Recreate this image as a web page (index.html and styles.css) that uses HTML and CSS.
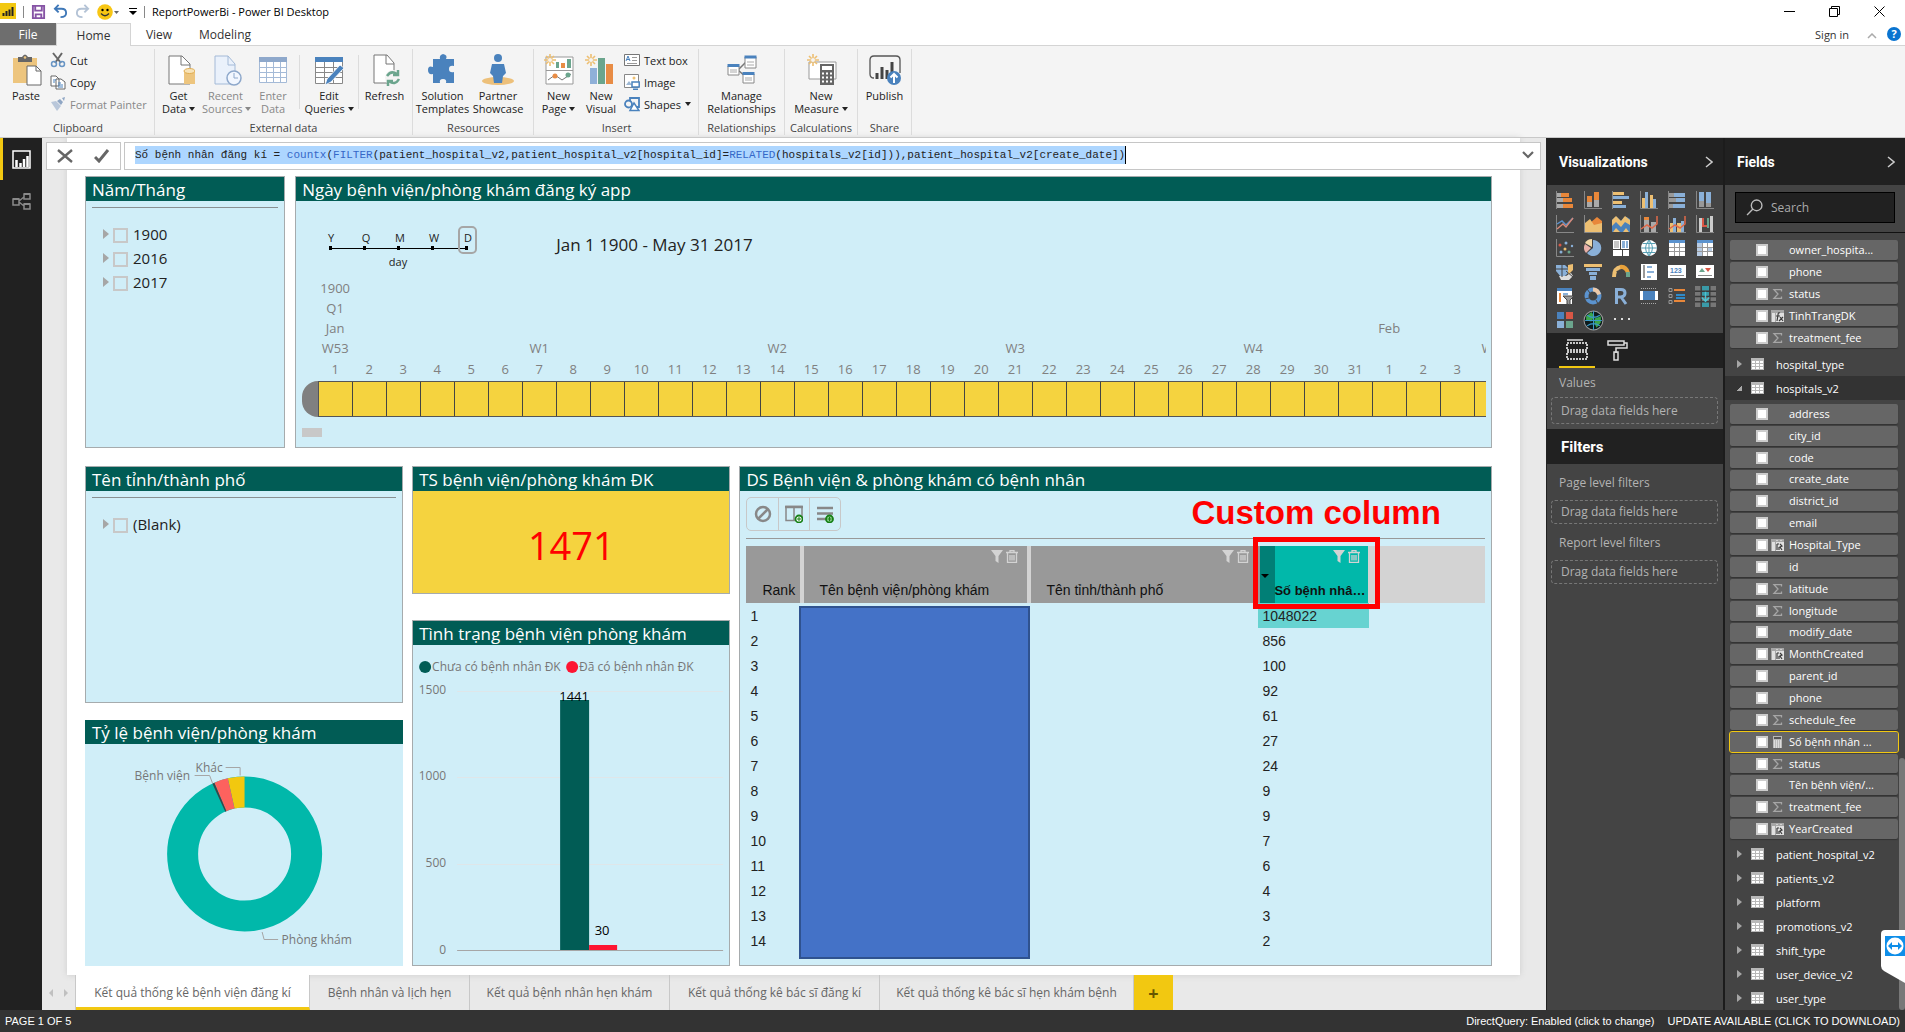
FILE: index.html
```html
<!DOCTYPE html>
<html lang="vi">
<head>
<meta charset="utf-8">
<meta name="viewport" content="width=device-width, initial-scale=1">
<title>ReportPowerBi - Power BI Desktop</title>
<link rel="stylesheet" href="styles.css">
</head>
<body>
<svg class="defs" aria-hidden="true">
  <symbol id="table" viewBox="0 0 13 12"><path fill="#b8b8b8" d="M0 0h13v12H0z"/><path fill="#fff" d="M1 3h3v2H1zM5 3h3v2H5zM9 3h3v2H9zM1 6h3v2H1zM5 6h3v2H5zM9 6h3v2H9zM1 9h3v2H1zM5 9h3v2H5zM9 9h3v2H9z"/></symbol>
  <symbol id="sigma" viewBox="0 0 13 12"><path fill="none" stroke="#a6a6a6" stroke-width="1.3" d="M10.500 3.500V1.700H3l4 4.300-4 4.300h7.500V8.500"/></symbol>
  <symbol id="calccol" viewBox="0 0 13 12"><path fill="#a6a6a6" d="M0 0h13v12H0z"/><path fill="#e0e0e0" d="M1 3h3v9H1zM5 3h8v9H5z"/><path fill="#d0d0d0" d="M5 1h2v1H5zM9 1h2v1H9z"/><path fill="none" stroke="#3a3a3a" stroke-width="1.200" d="M6 11V5M6 5h2M9 5l2 2-2 1 2 3M8 8v3"/></symbol>
  <symbol id="fx" viewBox="0 0 13 12"><path fill="#a6a6a6" d="M0 0h13v12H0z"/><path fill="#e0e0e0" d="M1 3h3v9H1zM5 3h8v9H5z"/><path fill="none" stroke="#3a3a3a" stroke-width="1.200" d="M9 3q-2-1-2 2l-1 6M5 6h4M8 11l4-4M9 7l3 4"/></symbol>
  <symbol id="calc" viewBox="0 0 13 12"><path fill="#b8b8b8" d="M2 0h9v12H2z"/><path fill="#555" d="M3 1h7v2H3z"/><path stroke="#fff" stroke-dasharray="1 1" d="M3 5h7M3 7h7M3 9h7M3 11h7"/></symbol>
  <symbol id="filter" viewBox="0 0 12 13"><path fill="#d3d3d3" d="M0 0h12L7.500 6v7L4.500 11V6z"/></symbol>
  <symbol id="trash" viewBox="0 0 12 13"><path fill="none" stroke="#d3d3d3" stroke-width="1.300" d="M0 2.500h12M4 2V.7h4V2M1.500 3v9.300h9V3M4 5v5.500M6 5v5.500M8 5v5.500"/></symbol>
  <symbol id="spark" viewBox="0 0 12 12"><path stroke="#edbf72" stroke-width="1.600" d="M6 0v12M0 6h12M2 2l8 8M10 2l-8 8"/><circle cx="6" cy="6" r="2" fill="#f4f4f4"/></symbol>
</svg>

<header class="titlebar">
  <svg class="logo" viewBox="0 0 16 16"><path fill="#f2c811" d="M0 0h16v16H0z"/><path stroke="#222" stroke-width="2" d="M3.500 13v-3M6.500 13V8M9.500 13V6.500M12.500 13V4"/></svg>
  <span class="vbar"></span>
  <button class="quick" aria-label="Save"><svg viewBox="0 0 16 16"><path fill="none" stroke="#8653a5" stroke-width="2" d="M2 2h12v13H2zM4.500 2v5h7V2M5 15v-4h6v4"/></svg></button>
  <button class="quick" aria-label="Undo"><svg viewBox="0 0 16 16"><path fill="none" stroke="#3f78b8" stroke-width="2" d="M6 1L2 5l4 4M2 5h7q5 0 5 4.500T8 14"/></svg></button>
  <button class="quick" aria-label="Redo"><svg viewBox="0 0 16 16"><path fill="none" stroke="#b4c3d6" stroke-width="2" d="M10 1l4 4-4 4M14 5H7Q2 5 2 9.500T8 14"/></svg></button>
  <button class="quick smile" aria-label="Feedback"><svg viewBox="0 0 22 16"><circle cx="8" cy="8" r="7.800" fill="#f8c614"/><circle cx="5.500" cy="6" r="1.200"/><circle cx="10.500" cy="6" r="1.200"/><path fill="none" stroke="#333" stroke-width="1.300" d="M4 9.500q4 4.500 8 0"/><path fill="#666" d="M17 7h5l-2.500 3z"/></svg></button>
  <button class="quick narrow" aria-label="Customize toolbar"><svg viewBox="0 0 8 8"><path d="M0 0h8v1H0zM0 3h8L4 7z"/></svg></button>
  <span class="vbar"></span>
  <span class="app-title">ReportPowerBi - Power BI Desktop</span>
  <span class="window-buttons">
    <button aria-label="Minimize"><svg viewBox="0 0 11 11"><path stroke="#000" d="M0 5.500h11"/></svg></button>
    <button aria-label="Restore"><svg viewBox="0 0 11 11"><path fill="none" stroke="#000" d="M.5 2.500h8v8h-8zM2.500 2V.5h8v8H9"/></svg></button>
    <button aria-label="Close"><svg viewBox="0 0 11 11"><path stroke="#000" d="M.5.5l10 10M10.500.5l-10 10"/></svg></button>
  </span>
</header>

<nav class="ribbon-tabs">
  <button class="file">File</button>
  <button class="home">Home</button>
  <button class="view">View</button>
  <button class="modeling">Modeling</button>
  <span class="account">
    <button>Sign in</button>
    <button aria-label="Collapse ribbon"><svg width="10" height="6" viewBox="0 0 10 6"><path fill="none" stroke="#aaa" stroke-width="1.500" d="M1 5l4-4 4 4"/></svg></button>
    <button class="help" aria-label="Help">?</button>
  </span>
</nav>

<section class="ribbon">
  <div class="group clipboard">
    <div class="tools">
      <button class="big w50"><svg viewBox="0 0 32 32"><path fill="#edc57e" d="M3 4h24v25H3z"/><path fill="#666" d="M8 3h4q3-5 6 0h4v5H8z"/><circle cx="15" cy="3.500" r="1.300" fill="#edc57e"/><path fill="#fff" stroke="#666" d="M17 12h9l5 5v14H17z"/><path fill="none" stroke="#666" d="M26 12v5h5"/></svg>Paste</button>
      <div class="stack">
        <button class="small"><svg viewBox="0 0 16 16"><path stroke="#666" stroke-width="2" d="M3 1l8 10M12 1L5 11"/><circle cx="4" cy="12" r="2.500" fill="none" stroke="#6895c5" stroke-width="1.500"/><circle cx="12" cy="12" r="2.500" fill="none" stroke="#6895c5" stroke-width="1.500"/></svg>Cut</button>
        <button class="small"><svg viewBox="0 0 16 16"><path fill="#fff" stroke="#666" d="M1 2h5l3 3v7H1zM6 5h5l4 3v7H6z"/><path stroke="#4a82bd" d="M3 6h3M3 8h2M8 9h3M8 11h5M8 13h5"/></svg>Copy</button>
        <button class="small off"><svg viewBox="0 0 16 16"><path fill="#b9c7da" d="M1 6l5-1 5 5-4 5z"/><path fill="#8fa6c4" d="M7 5l3-2 3 3-2 3zM12 2l3-1-1 4z"/></svg>Format Painter</button>
      </div>
    </div>
    <span class="caption">Clipboard</span>
  </div>
  <div class="group external">
    <div class="tools">
      <button class="big w47"><svg viewBox="0 0 32 32"><path fill="#fff" stroke="#777" d="M6 2h13l8 8v20H6z"/><path fill="none" stroke="#777" d="M18 2v9h9"/><path fill="#edc57e" d="M21 17h11v13H21z"/><ellipse cx="26.500" cy="17" rx="5.500" ry="2.500" fill="#f7e3b8" stroke="#e0ac50"/></svg>Get<br>Data <i class="arrow"></i></button>
      <button class="big off w47"><svg viewBox="0 0 32 32"><path fill="#eaf1fb" stroke="#a4bad7" d="M5 2h13l7 8v20H5z"/><path fill="none" stroke="#a4bad7" d="M18 2v9h7"/><circle cx="24" cy="24" r="7" fill="#f2f7ff" stroke="#8ea8cb" stroke-width="1.500"/><path fill="none" stroke="#8ea8cb" d="M24 19v5h4"/></svg>Recent<br>Sources <i class="arrow"></i></button>
      <button class="big off w48"><svg viewBox="0 0 32 32"><path fill="#fff" stroke="#a4bad7" d="M2.500 3.500h27v25h-27z"/><path fill="#8ea8cb" d="M2 3h28v5H2z"/><path fill="none" stroke="#a4bad7" d="M2 13.500h28M2 18.500h28M2 23.500h28M9.500 8v20M16.500 8v20M23.500 8v20"/></svg>Enter<br>Data</button>
      <span class="split"></span>
      <button class="big w54"><svg viewBox="0 0 32 32"><path fill="#fff" stroke="#888" d="M2.500 3.500h27v26h-27z"/><path fill="#4a82bd" d="M2 3h28v5H2z"/><path fill="none" stroke="#888" d="M2 13.500h28M2 18.500h28M2 23.500h28M11.500 8v21M20.500 8v21"/><path fill="#4a82bd" stroke="#fff" stroke-width=".8" d="M12 31l2-6 13-14 4 3-13 14z"/></svg>Edit<br>Queries <i class="arrow"></i></button>
      <span class="split"></span>
      <button class="big w47"><svg viewBox="0 0 32 32"><path fill="#fff" stroke="#777" d="M5 1h13l7 8v20H5z"/><path fill="none" stroke="#777" d="M17 1v9h8"/><circle cx="24" cy="24" r="8" fill="#f4f4f4"/><path fill="none" stroke="#6ba58d" stroke-width="2.500" d="M18 22q4-6 10-2M30 25q-4 7-10 2M29 16v5h-5M19 32v-5h5"/></svg>Refresh</button>
    </div>
    <span class="caption">External data</span>
  </div>
  <div class="group resources">
    <div class="tools">
      <button class="big w57"><svg viewBox="0 0 32 32"><path fill="#4a82bd" d="M6 5h7q-1-4 3-5 5 1 3 5h8v7q-5-1-5 3t5 3v11h-8q1-4-3-4t-3 4H6v-9q-5 1-5-4t5-3z"/></svg>Solution<br>Templates</button>
      <button class="big w54"><svg viewBox="0 0 32 32"><ellipse cx="16" cy="27" rx="16" ry="4" fill="#edc07a"/><circle cx="16" cy="4" r="4" fill="#4a82bd"/><path fill="#4a82bd" d="M10 10h12l2 9-3 3-1 7h-8l-1-7-3-3z"/></svg>Partner<br>Showcase</button>
    </div>
    <span class="caption">Resources</span>
  </div>
  <div class="group insert">
    <div class="tools">
      <button class="big w47"><svg viewBox="0 0 32 32"><path fill="#fff" stroke="#999" d="M3 3h27v27H3z"/><path stroke="#999" d="M3 16.500h27"/><path fill="#6ba58d" d="M13 8h3v6h-3zM24 5h4v9h-4z"/><path fill="#e88c45" d="M18 9h4v5h-4z"/><path fill="none" stroke="#777" d="M5 26l7-5 7 5 9-6"/><circle cx="12" cy="22" r="2.500" fill="#e88c45"/><circle cx="25" cy="21" r="2.500" fill="#6ba58d"/><use href="#spark" x="1" y="0" width="12" height="12"/></svg>New<br>Page <i class="arrow"></i></button>
      <button class="big w38"><svg viewBox="0 0 32 32"><path fill="#8fb0d8" d="M5 14h7v16H5z"/><path fill="#6ba58d" d="M13 4h7v26h-7z"/><path fill="#e88c45" d="M21 10h7v20h-7z"/><use href="#spark" x="0" y="0" width="12" height="12"/></svg>New<br>Visual</button>
      <div class="stack">
        <button class="small"><svg viewBox="0 0 16 16"><path fill="#fff" stroke="#777" d="M.5 2.500h15v11H.5z"/><path fill="none" stroke="#4a82bd" d="M2 9l2-5 2 5M3 7.500h2.500"/><path stroke="#999" d="M8 5.500h5M8 8.500h5M3 11.500h10"/></svg>Text box</button>
        <button class="small"><svg viewBox="0 0 16 16"><path fill="#fff" stroke="#888" d="M.5.5h14v13H.5z"/><path fill="#9db8d4" d="M2 11l3-4 3 4z"/><circle cx="10" cy="4" r="1.500" fill="#edbf72"/><path fill="#fff" stroke="#4a82bd" stroke-width="1.500" d="M8 8h7.200v5H8zM9 15.300h5"/></svg>Image</button>
        <button class="small"><svg viewBox="0 0 16 16"><circle cx="4.500" cy="8" r="3.500" fill="none" stroke="#4a82bd" stroke-width="1.800"/><path fill="none" stroke="#4a82bd" stroke-width="1.800" d="M6 5V2h9v9h-2"/><path fill="#fff" stroke="#4a82bd" stroke-width="1.500" d="M10 7l5 7.500H6z"/></svg>Shapes <i class="arrow"></i></button>
      </div>
    </div>
    <span class="caption">Insert</span>
  </div>
  <div class="group relations">
    <div class="tools">
      <button class="big wide"><svg viewBox="0 0 32 32"><path stroke="#777" stroke-width="1.500" d="M12 16l9-9M12 16l9 8"/><path fill="#fff" stroke="#888" d="M2 12h11v9H2zM19 3h11v11H19zM17 20h11v9H17z"/><path fill="#4a82bd" d="M1.500 10h12v3h-12zM18.500 1.500h12v3h-12zM16.500 18h12v3h-12z"/><path stroke="#aaa" d="M4 16h7M4 18h7M21 8h7M21 11h7M19 24h7M19 26h7"/></svg>Manage<br>Relationships</button>
    </div>
    <span class="caption">Relationships</span>
  </div>
  <div class="group calculations">
    <div class="tools">
      <button class="big wide"><svg viewBox="0 0 32 32"><path fill="#fff" stroke="#999" d="M4 8h27v17H4z"/><path fill="#666" d="M15 10h14v21H15z"/><path fill="#fff" d="M17 12h10v4H17z"/><path stroke="#fff" stroke-width="2" stroke-dasharray="2 2" d="M17 19.500h10M17 23.500h10M17 27.500h10"/><use href="#spark" x="2" y="0" width="12" height="12"/></svg>New<br>Measure <i class="arrow"></i></button>
    </div>
    <span class="caption">Calculations</span>
  </div>
  <div class="group share">
    <div class="tools">
      <button class="big wide"><svg viewBox="0 0 32 32"><path fill="none" stroke="#555" stroke-width="1.300" d="M5 24q-4 0-4-4V6q0-4 4-4h22q4 0 4 4v13"/><path stroke="#444" stroke-width="3" d="M8 25v-6M13 25V13M18 25v-9M23 25V8"/><circle cx="25" cy="24" r="7" fill="#4a82bd"/><path fill="none" stroke="#fff" stroke-width="2" d="M25 29V20M21.500 23.500L25 20l3.500 3.500"/></svg>Publish</button>
    </div>
    <span class="caption">Share</span>
  </div>
</section>

<main class="workspace">
  <nav class="views">
    <button class="current" aria-label="Report view"><svg viewBox="0 0 19 19"><path fill="none" stroke="#fff" stroke-width="1.500" d="M1 1h17v17H1z"/><path stroke="#fff" stroke-width="2.500" d="M4.500 17v-7M8.500 17v-4M12 17V9M15.500 17V6"/></svg></button>
    <button aria-label="Relationships view"><svg viewBox="0 0 19 19"><path fill="none" stroke="#8a8a8a" stroke-width="1.500" d="M1 7h6v6H1zM12 2h6v5h-6zM12 12h6v5h-6zM7 9l5-4M7 10l5 4"/><path stroke="#8a8a8a" stroke-width="2" d="M1 7h6M12 2h6M12 12h6"/></svg></button>
  </nav>

  <div class="center">
    <div class="stage">
      <div class="formula">
        <div class="commit">
          <button aria-label="Cancel"><svg viewBox="0 0 16 14"><path stroke="#666" stroke-width="2.400" d="M1 1l14 12M15 1L1 13"/></svg></button>
          <button aria-label="Apply"><svg viewBox="0 0 16 14"><path fill="none" stroke="#666" stroke-width="3" d="M1 8l4 4L14 1"/></svg></button>
        </div>
        <div class="editor">
          <div class="code" role="textbox" contenteditable="true" spellcheck="false" aria-label="Formula"><span class="marked">Số bệnh nhân đăng kí = <b>countx</b>(<b>FILTER</b>(patient_hospital_v2,patient_hospital_v2[hospital_id]=<b>RELATED</b>(hospitals_v2[id])),patient_hospital_v2[create_date])</span></div>
          <button aria-label="Expand formula bar"><svg viewBox="0 0 12 8"><path fill="none" stroke="#666" stroke-width="2.200" d="M1 1l5 5 5-5"/></svg></button>
        </div>
      </div>

      <div class="page">
        <div class="row-top">
          <section class="card">
            <h2>Năm/Tháng</h2>
            <div class="slicer">
              <label><i class="twist"></i><input type="checkbox">1900</label>
              <label><i class="twist"></i><input type="checkbox">2016</label>
              <label><i class="twist"></i><input type="checkbox">2017</label>
            </div>
          </section>
          <section class="card">
            <h2>Ngày bệnh viện/phòng khám đăng ký app</h2>
            <div class="timeline">
              <div class="time-head">
                <svg class="grain" viewBox="0 0 160 44" width="160" height="44">
                  <g class="grain-text"><text x="7" y="16">Y</text><text x="42" y="16">Q</text><text x="76" y="16">M</text><text x="110" y="16">W</text><text x="144" y="16">D</text><text x="74" y="40">day</text></g>
                  <path stroke="#000" d="M6 22.500h138"/><path fill="#000" d="M5 20h3v4H5zM39 20h3v4h-3zM73 20h3v4h-3zM107 20h3v4h-3zM141 20h3v4h-3z"/>
                  <rect x="135" y="1" width="17" height="26" rx="4" fill="none" stroke="#a6a6a6" stroke-width="2"/>
                </svg>
                <span class="range">Jan 1 1900 - May 31 2017</span>
              </div>
              <div class="scale">
                <span class="c1">1900</span>
                <span class="c1">Q1</span>
                <span class="c1">Jan</span><span class="c32">Feb</span>
                <span class="c1 wk">W53</span><span class="c7 wk">W1</span><span class="c14 wk">W2</span><span class="c21 wk">W3</span><span class="c28 wk">W4</span><span class="c35 wk">W5</span>
              </div>
              <ol class="days"><li>1</li><li>2</li><li>3</li><li>4</li><li>5</li><li>6</li><li>7</li><li>8</li><li>9</li><li>10</li><li>11</li><li>12</li><li>13</li><li>14</li><li>15</li><li>16</li><li>17</li><li>18</li><li>19</li><li>20</li><li>21</li><li>22</li><li>23</li><li>24</li><li>25</li><li>26</li><li>27</li><li>28</li><li>29</li><li>30</li><li>31</li><li>1</li><li>2</li><li>3</li><li></li></ol>
              <div class="track"><span class="cap"></span><span class="cells"></span></div>
              <div class="thumb"></div>
            </div>
          </section>
        </div>

        <div class="row-bottom">
          <div class="column">
            <section class="card province">
              <h2>Tên tỉnh/thành phố</h2>
              <div class="slicer"><label><i class="twist"></i><input type="checkbox">(Blank)</label></div>
            </section>
            <section class="card ratio">
              <h2>Tỷ lệ bệnh viện/phòng khám</h2>
              <svg class="chart" viewBox="0 0 317 222">
                <g fill="none" stroke-width="31"><circle cx="159" cy="110" r="62" stroke="#01b8aa"/>
                <circle cx="159" cy="110" r="62" stroke="#f2c80f" pathLength="360" stroke-dasharray="12.500 360" transform="rotate(-102.500 159 110)"/>
                <circle cx="159" cy="110" r="62" stroke="#fd625e" pathLength="360" stroke-dasharray="10.500 360" transform="rotate(-113 159 110)"/>
                <circle cx="159" cy="110" r="62" stroke="#374649" pathLength="360" stroke-dasharray="1.600 360" transform="rotate(-114.600 159 110)"/></g>
                <path fill="none" stroke="#a6a6a6" d="M109 31.500h15l3 8M140 23.500h14.500v8M176.500 188l2 7.500h14"/>
                <g class="axis"><text x="49" y="36">Bệnh viện</text><text x="110" y="28">Khác</text><text x="196" y="200">Phòng khám</text></g>
              </svg>
            </section>
          </div>
          <div class="column">
            <section class="card total">
              <h2>TS bệnh viện/phòng khám ĐK</h2>
              <div class="figure">1471</div>
            </section>
            <section class="card state">
              <h2>Tình trạng bệnh viện phòng khám</h2>
              <svg class="chart" viewBox="0 0 316 320">
                <circle cx="12" cy="22" r="6" fill="#015c55"/><circle cx="159" cy="22" r="6" fill="#fd1532"/>
                <path stroke="#dfe6e9" d="M44 46.500h266M44 132.500h266M44 219.500h266"/><path stroke="#a6a6a6" d="M44 305.500h266"/>
                <path fill="#015c55" d="M147 55h29v250h-29z"/><path fill="#fd1532" d="M176 300h28v5h-28z"/>
                <g class="axis"><text x="19" y="26">Chưa có bệnh nhân ĐK</text><text x="166" y="26">Đã có bệnh nhân ĐK</text></g>
                <g class="axis end"><text x="33" y="49">1500</text><text x="33" y="135">1000</text><text x="33" y="222">500</text><text x="33" y="309">0</text></g>
                <g class="value"><text x="161" y="56">1441</text><text x="189" y="290">30</text></g>
              </svg>
            </section>
          </div>
          <section class="card list">
            <h2>DS Bệnh viện &amp; phòng khám có bệnh nhân</h2>
            <div class="list-body">
              <div class="list-tools">
                <button aria-label="Clear"><svg viewBox="0 0 18 18"><circle cx="9" cy="9" r="7" fill="none" stroke="#888" stroke-width="2.500"/><path stroke="#888" stroke-width="2.500" d="M4.500 13.500l9-9"/></svg></button>
                <button aria-label="Add column"><svg viewBox="0 0 18 18"><path fill="none" stroke="#888" stroke-width="1.500" d="M1 1.500h16v14H1zM9 2v13"/><path stroke="#888" stroke-width="2.500" d="M0 2h18"/><circle cx="14" cy="14" r="3.500" fill="#fff" stroke="#168016" stroke-width="1.800"/><path stroke="#168016" d="M14 12v4M12 14h4"/></svg></button>
                <button aria-label="Add row"><svg viewBox="0 0 18 18"><path stroke="#888" stroke-width="2.500" d="M1 3h16M1 8.500h16M1 14h9"/><circle cx="13.500" cy="14" r="3.500" fill="#8c8" stroke="#168016" stroke-width="1.800"/><path stroke="#168016" d="M13.500 12v4M11.500 14h4"/></svg></button>
              </div>
              <div class="table-wrap">
                <table>
                  <colgroup><col class="k-rank"><col class="k-name"><col class="k-city"><col class="k-count"><col></colgroup>
                  <thead><tr>
                    <th class="rank"><div>Rank</div></th>
                    <th><div><span class="ops"><svg><use href="#filter"/></svg><svg><use href="#trash"/></svg></span>Tên bệnh viện/phòng khám</div></th>
                    <th><div><span class="ops"><svg><use href="#filter"/></svg><svg><use href="#trash"/></svg></span>Tên tỉnh/thành phố</div></th>
                    <th class="sorted"><div><span class="ops"><svg><use href="#filter"/></svg><svg><use href="#trash"/></svg></span><i class="sort"></i>Số bệnh nhâ…</div></th>
                    <th class="rest"></th>
                  </tr></thead>
                  <tbody>
                    <tr><td>1</td><td></td><td></td><td class="top">1048022</td><td></td></tr>
                    <tr><td>2</td><td></td><td></td><td>856</td><td></td></tr>
                    <tr><td>3</td><td></td><td></td><td>100</td><td></td></tr>
                    <tr><td>4</td><td></td><td></td><td>92</td><td></td></tr>
                    <tr><td>5</td><td></td><td></td><td>61</td><td></td></tr>
                    <tr><td>6</td><td></td><td></td><td>27</td><td></td></tr>
                    <tr><td>7</td><td></td><td></td><td>24</td><td></td></tr>
                    <tr><td>8</td><td></td><td></td><td>9</td><td></td></tr>
                    <tr><td>9</td><td></td><td></td><td>9</td><td></td></tr>
                    <tr><td>10</td><td></td><td></td><td>7</td><td></td></tr>
                    <tr><td>11</td><td></td><td></td><td>6</td><td></td></tr>
                    <tr><td>12</td><td></td><td></td><td>4</td><td></td></tr>
                    <tr><td>13</td><td></td><td></td><td>3</td><td></td></tr>
                    <tr><td>14</td><td></td><td></td><td>2</td><td></td></tr>
                  </tbody>
                </table>
                <div class="redaction"></div>
                <div class="callout"></div>
                <div class="callout-text">Custom column</div>
              </div>
            </div>
          </section>
        </div>
      </div>
    </div>

    <nav class="sheets">
      <span class="pager"><i></i><i class="next"></i></span>
      <button class="current s1">Kết quả thống kê bệnh viện đăng kí</button>
      <button class="s2">Bệnh nhân và lịch hẹn</button>
      <button class="s3">Kết quả bệnh nhân hẹn khám</button>
      <button class="s4">Kết quả thống kê bác sĩ đăng kí</button>
      <button class="s5">Kết quả thống kê bác sĩ hẹn khám bệnh</button>
      <button class="add" aria-label="New page">+</button>
    </nav>
  </div>

  <aside class="panel visuals">
    <h3>Visualizations<svg viewBox="0 0 8 12"><path fill="none" stroke="#ccc" stroke-width="1.500" d="M1 1l6 5-6 5"/></svg></h3>
    <div class="gallery">
      <button aria-label="Stacked bar"><svg viewBox="0 0 18 18"><path stroke="#888" d="M.5 0v18"/><path fill="#e8873a" d="M4 2h9v4H4zM7 7h9v4H7zM6 13h11v4H6z"/><path fill="#aaa" d="M1 2h4v4H1zM1 7h6v4H1zM1 13h6v4H1z"/></svg></button>
      <button aria-label="Stacked column"><svg viewBox="0 0 18 18"><path fill="none" stroke="#888" d="M.5 0v17.500H18"/><path fill="#e8873a" d="M3 5h5v7H3zM10 1h5v9h-5z"/><path fill="#aaa" d="M3 11h5v5H3zM10 9h5v7h-5z"/></svg></button>
      <button aria-label="Clustered bar"><svg viewBox="0 0 18 18"><path stroke="#888" d="M.5 0v18"/><path fill="#edbf72" d="M1 1h11v3H1zM1 10h9v3H1z"/><path fill="#8ab0d8" d="M1 5h16v3H1zM1 14h13v3H1z"/></svg></button>
      <button aria-label="Clustered column"><svg viewBox="0 0 18 18"><path fill="none" stroke="#888" d="M.5 0v17.500H18"/><path fill="#edbf72" d="M2 7h3v10H2zM10 4h3v13h-3z"/><path fill="#8ab0d8" d="M5 1h3v16H5zM13 8h3v9h-3z"/></svg></button>
      <button aria-label="100% stacked bar"><svg viewBox="0 0 18 18"><path stroke="#888" d="M.5 0v18"/><path fill="#8ab0d8" d="M6 2h11v4H6zM8 7h9v4H8zM5 13h12v4H5z"/><path fill="#999" d="M1 2h5v4H1zM1 7h7v4H1zM1 13h4v4H1z"/></svg></button>
      <button aria-label="100% stacked column"><svg viewBox="0 0 18 18"><path fill="none" stroke="#888" d="M.5 0v17.500H18"/><path fill="#8ab0d8" d="M3 1h5v9H3zM10 1h5v11h-5z"/><path fill="#999" d="M3 10h5v6H3zM10 12h5v4h-5z"/></svg></button>

      <button aria-label="Line"><svg viewBox="0 0 18 18"><path fill="none" stroke="#888" d="M.5 0v17.500H18"/><path fill="none" stroke="#5b93cf" stroke-width="1.400" d="M1 9l5-3 4 4 7-7"/><path fill="none" stroke="#d98978" stroke-width="1.400" d="M1 14l6-5 3 3 7-9"/></svg></button>
      <button aria-label="Area"><svg viewBox="0 0 18 18"><path fill="#e8873a" d="M6 8l7-6 5 4v9H5z"/><path fill="#edbf72" d="M1 8l5-4 4 6 8-2v9H1z"/><path fill="none" stroke="#888" d="M.5 0v17.500H18"/></svg></button>
      <button aria-label="Stacked area"><svg viewBox="0 0 18 18"><path fill="#4a82bd" d="M0 2h18v15H0z"/><path fill="#444" d="M0 0h18v4l-5-3-4 5-5-5-4 4z"/><path fill="#edbf72" d="M0 5l4-4 5 5 4-5 5 4v5l-5-3-4 5-5-5-4 4zM1 17l3-4 4 4zM11 17l3-4 3 4z"/></svg></button>
      <button aria-label="Line and stacked column"><svg viewBox="0 0 18 18"><path fill="none" stroke="#888" d="M.5 0v17.500H18"/><path fill="#aaa" d="M4 3h5v14H4zM11 7h5v10h-5z"/><path fill="#e8873a" d="M4 2h5v3H4z"/><path fill="none" stroke="#e06a4a" stroke-width="1.500" d="M1 14l6-4 5 3 5-4V1"/></svg></button>
      <button aria-label="Line and clustered column"><svg viewBox="0 0 18 18"><path fill="none" stroke="#888" d="M.5 0v17.500H18"/><path fill="#8ab0d8" d="M5 3h3v14H5zM13 6h3v11h-3z"/><path fill="#edbf72" d="M2 8h3v9H2zM9 8h4v9H9z"/><path fill="none" stroke="#e06a4a" stroke-width="1.500" d="M1 14l6-4 5 3 5-4V1"/></svg></button>
      <button aria-label="Waterfall"><svg viewBox="0 0 18 18"><path fill="none" stroke="#888" d="M.5 0v17.500H18"/><path fill="#ccc" d="M3 3h3v14H3zM14 1h3v16h-3z"/><path fill="#d95745" d="M6 3h2v9H6z"/><path fill="#6ba58d" d="M11 3h2v10h-2z"/><path fill="#d95745" d="M8 10h3v2H8z"/></svg></button>

      <button aria-label="Scatter"><svg viewBox="0 0 18 18"><path fill="none" stroke="#888" d="M.5 0v17.500H18"/><g fill="#8ab0d8"><circle cx="10" cy="4" r="1.500"/><circle cx="5" cy="13" r="1.500"/><circle cx="16" cy="7" r="1.200"/></g><circle cx="4" cy="6" r="1.500" fill="#d95745"/><circle cx="9" cy="10" r="1.500" fill="#edbf72"/><circle cx="13" cy="13" r="1.500" fill="#6ba58d"/></svg></button>
      <button aria-label="Pie"><svg viewBox="0 0 18 18"><path fill="#8ab0d8" d="M9 9V1a8 8 0 1 1-6 13z"/><path fill="#f3d9a8" d="M8 8V0a8 8 0 0 0-7 4z"/><path fill="#e8b0a8" d="M7 9L1 5a8 8 0 0 0 1 9z"/></svg></button>
      <button aria-label="Treemap"><svg viewBox="0 0 18 18"><path fill="#fff" d="M1 1h7v9H1zM9 1h8v9H9zM1 11h9v6H1zM11 11h6v6h-6z"/><path fill="#8ab0d8" d="M10 2h3v7h-3zM14 2h2v7h-2z"/><path fill="#c7c7c7" d="M2 2h5v7H2z"/></svg></button>
      <button aria-label="Map"><svg viewBox="0 0 18 18"><circle cx="9" cy="9" r="8" fill="#fff"/><path fill="none" stroke="#57a0b5" d="M9 1v16M1 9h16M3 4.500h12M3 13.500h12M9 1q-7 8 0 16M9 1q7 8 0 16"/></svg></button>
      <button aria-label="Table"><svg viewBox="0 0 18 18"><path fill="#fff" d="M1 1h16v16H1z"/><path fill="#5b93cf" d="M1 1h16v3H1z"/><path stroke="#999" d="M1 8.500h16M1 12.500h16M6.500 4v13M11.500 4v13"/></svg></button>
      <button aria-label="Matrix"><svg viewBox="0 0 18 18"><path fill="#fff" d="M1 1h16v16H1z"/><path fill="#5b93cf" d="M1 1h16v3H1z"/><path fill="#b8cce4" d="M1 4h5v13H1zM11 8h5v4h-5z"/><path stroke="#999" d="M1 8.500h16M1 12.500h16M6.500 4v13M11.500 4v13"/></svg></button>

      <button aria-label="Filled map"><svg viewBox="0 0 18 18"><path fill="#8ab0d8" d="M0 2h9l3 3v5l-4 4H5L0 8z"/><path fill="#edbf72" d="M12 2l5-1v6l-5 5z"/><path fill="#ddd" d="M3 13h7l5-3 2 3-4 4H5z"/><path fill="none" stroke="#444" d="M0 6h12M6 2v12M10 8l7 6"/></svg></button>
      <button aria-label="Funnel"><svg viewBox="0 0 18 18"><path fill="#edbf72" d="M0 1h18v3H0z"/><path fill="#8ab0d8" d="M2 5h14v3H2zM5 9h8v3H5zM6 13h6v4H6z"/></svg></button>
      <button aria-label="Gauge"><svg viewBox="0 0 18 18"><path fill="none" stroke="#edbf72" stroke-width="4" d="M2 14q0-9 7-10"/><path fill="none" stroke="#e8a13a" stroke-width="4" d="M8 4q6-1 8 6"/><path stroke="#6ba58d" stroke-width="4" d="M16 9v5"/><path stroke="#444" stroke-width="2" d="M8 12l-3-4"/></svg></button>
      <button aria-label="Multi-row card"><svg viewBox="0 0 18 18"><path fill="#fff" d="M1 1h16v16H1z"/><path fill="#999" d="M3 2h2v13H3z"/><path fill="#8ab0d8" d="M7 3h5v2H7zM7 8h7v2H7zM7 13h4v2H7z"/></svg></button>
      <button aria-label="Card"><svg viewBox="0 0 18 18"><path fill="#fff" d="M0 2h18v13H0z"/><path stroke="#888" d="M2 12.500h14"/><text class="tiny" x="2" y="10">123</text></svg></button>
      <button aria-label="KPI"><svg viewBox="0 0 18 18"><path fill="#fff" d="M0 2h18v13H0z"/><path stroke="#888" d="M2 12.500h14"/><path fill="#6ba58d" d="M3 9l3-4 3 4z"/><path fill="#d95745" d="M9 5h6l-3 4z"/></svg></button>

      <button aria-label="Slicer"><svg viewBox="0 0 18 18"><path fill="#fff" d="M1 1h15v16H1z"/><path fill="#4a82bd" d="M1 1h15v3H1z"/><path stroke="#e8873a" stroke-width="2" d="M4 6v9"/><path stroke="#8ab0d8" stroke-width="2" d="M7 7h5"/><path fill="#999" stroke="#444" d="M7 9h11l-4 4v5l-3-1v-4z"/></svg></button>
      <button aria-label="Donut"><svg viewBox="0 0 18 18"><circle cx="9" cy="9" r="6.500" fill="none" stroke="#5b93cf" stroke-width="4"/><path fill="none" stroke="#edc9a8" stroke-width="4" d="M9 2.500a6.500 6.500 0 0 1 6 5"/><path stroke="#444" d="M3 2l3 4M1 12l4-1M12 13l2 4"/></svg></button>
      <button aria-label="R script visual"><svg viewBox="0 0 18 18"><path fill="none" stroke="#8ab0d8" stroke-width="3" d="M4.500 17V2.500H9q4 0 4 3.500t-4 4H5M9 10l5 7"/></svg></button>
      <button aria-label="Timeline"><svg viewBox="0 0 18 18"><path stroke="#aaa" stroke-dasharray="1 1" d="M1 1.500h16M1 16.500h16"/><path fill="#fff" d="M0 4h18v9H0z"/><path fill="#4a82bd" d="M3 4h12v9H3z"/></svg></button>
      <button aria-label="Hierarchy slicer"><svg viewBox="0 0 18 18"><path stroke="#e8873a" stroke-width="2" d="M6 3h11M6 14h11"/><path stroke="#2f8ac8" stroke-width="2" d="M8 8h9M8 11h9"/><path fill="none" stroke="#999" d="M1 1.500h3v3H1zM1 7.500h3v3H1zM1 13.500h3v3H1z"/></svg></button>
      <button class="grown" aria-label="Attribute slicer"><svg viewBox="0 0 22 22"><path fill="#777" d="M0 0h22v22H0z"/><path fill="#3a9aa8" d="M7 0h8v5H7zM7 6h8v5H7zM7 17h8v5H7z"/><path stroke="#3a3a3a" stroke-width="1.500" d="M0 5.500h22M0 11h22M0 16.500h22M6.500 0v22M15.500 0v22"/><path fill="none" stroke="#49c4d4" stroke-width="1.500" d="M11 6v10M7 12l4 4 4-4"/></svg></button>

      <button aria-label="Chiclet slicer"><svg viewBox="0 0 18 18"><path fill="#4a82bd" d="M1 1h7v7H1z"/><path fill="#d95745" d="M10 1h7v7h-7z"/><path fill="#8ab0d8" d="M1 10h7v7H1z"/><path fill="#6ba58d" d="M10 10h7v7h-7z"/></svg></button>
      <button class="grown" aria-label="Globe map"><svg viewBox="0 0 20 20"><circle cx="10" cy="10" r="9" fill="#0c1a1c" stroke="#999"/><path fill="#3aa54a" d="M3 6l5-4 3 4-3 5-5-1zM11 8l6-2v6l-4 5-2-4z"/><path fill="none" stroke="#3a9ac8" d="M2 10h16M10 1v18M4 15q6-4 12 0M4 5q6 4 12 0"/></svg></button>
      <button aria-label="More visuals"><svg viewBox="0 0 18 18"><path stroke="#ddd" stroke-width="2" stroke-dasharray="2 5" d="M2 8h16"/></svg></button>
    </div>
    <div class="wells-tabs">
      <button class="current" aria-label="Fields"><svg viewBox="0 0 22 22"><path stroke="#ddd" stroke-width="1.500" d="M1 1h16"/><path fill="none" stroke="#fff" stroke-width="1.500" stroke-dasharray="2 1" d="M1 4h20v7H1zM1 13h20v7H1z"/></svg></button>
      <button aria-label="Format"><svg viewBox="0 0 22 22"><path fill="none" stroke="#ddd" stroke-width="1.500" d="M2 2h16v4H2zM18 4h3v5H10v5M8 13h4v8H8z"/></svg></button>
    </div>
    <div class="well values"><p>Values</p><div class="drop">Drag data fields here</div></div>
    <h4>Filters</h4>
    <div class="well"><p>Page level filters</p><div class="drop">Drag data fields here</div></div>
    <div class="well"><p>Report level filters</p><div class="drop">Drag data fields here</div></div>
  </aside>

  <aside class="panel fields">
    <h3>Fields<svg viewBox="0 0 8 12"><path fill="none" stroke="#ccc" stroke-width="1.500" d="M1 1l6 5-6 5"/></svg></h3>
    <label class="search"><svg viewBox="0 0 16 16"><circle cx="10" cy="6" r="5" fill="none" stroke="#bbb" stroke-width="1.300"/><path stroke="#bbb" stroke-width="1.300" d="M6.500 9.500L1 15"/></svg><input type="text" placeholder="Search" aria-label="Search fields"></label>
    <div class="tree">
      <div class="leafs first">
        <label><input type="checkbox"><svg></svg>owner_hospita...</label>
        <label><input type="checkbox"><svg></svg>phone</label>
        <label><input type="checkbox"><svg><use href="#sigma"/></svg>status</label>
        <label><input type="checkbox"><svg><use href="#fx"/></svg>TinhTrangDK</label>
        <label><input type="checkbox"><svg><use href="#sigma"/></svg>treatment_fee</label>
      </div>
      <button class="node"><i class="twist"></i><svg><use href="#table"/></svg>hospital_type</button>
      <button class="node open"><i class="twist"></i><svg><use href="#table"/></svg>hospitals_v2</button>
      <div class="leafs main">
        <label><input type="checkbox"><svg></svg>address</label>
        <label><input type="checkbox"><svg></svg>city_id</label>
        <label><input type="checkbox"><svg></svg>code</label>
        <label><input type="checkbox"><svg></svg>create_date</label>
        <label><input type="checkbox"><svg></svg>district_id</label>
        <label><input type="checkbox"><svg></svg>email</label>
        <label><input type="checkbox"><svg><use href="#calccol"/></svg>Hospital_Type</label>
        <label><input type="checkbox"><svg></svg>id</label>
        <label><input type="checkbox"><svg><use href="#sigma"/></svg>latitude</label>
        <label><input type="checkbox"><svg><use href="#sigma"/></svg>longitude</label>
        <label><input type="checkbox"><svg></svg>modify_date</label>
        <label><input type="checkbox"><svg><use href="#calccol"/></svg>MonthCreated</label>
        <label><input type="checkbox"><svg></svg>parent_id</label>
        <label><input type="checkbox"><svg></svg>phone</label>
        <label><input type="checkbox"><svg><use href="#sigma"/></svg>schedule_fee</label>
        <label class="picked"><input type="checkbox"><svg><use href="#calc"/></svg>Số bệnh nhân ...</label>
        <label><input type="checkbox"><svg><use href="#sigma"/></svg>status</label>
        <label><input type="checkbox"><svg></svg>Tên bệnh viện/...</label>
        <label><input type="checkbox"><svg><use href="#sigma"/></svg>treatment_fee</label>
        <label><input type="checkbox"><svg><use href="#calccol"/></svg>YearCreated</label>
      </div>
      <button class="node"><i class="twist"></i><svg><use href="#table"/></svg>patient_hospital_v2</button>
      <button class="node"><i class="twist"></i><svg><use href="#table"/></svg>patients_v2</button>
      <button class="node"><i class="twist"></i><svg><use href="#table"/></svg>platform</button>
      <button class="node"><i class="twist"></i><svg><use href="#table"/></svg>promotions_v2</button>
      <button class="node"><i class="twist"></i><svg><use href="#table"/></svg>shift_type</button>
      <button class="node"><i class="twist"></i><svg><use href="#table"/></svg>user_device_v2</button>
      <button class="node"><i class="twist"></i><svg><use href="#table"/></svg>user_type</button>
      <span class="scrollbar"></span>
      <svg class="remote" viewBox="0 0 24 54"><path fill="#fff" d="M24 0H4Q0 0 0 4v32q0 3 3 5l21 12z"/><path fill="#0e8ee9" d="M4 6h20v20H4z"/><circle cx="14" cy="16" r="8.500" fill="#fff"/><path fill="#0e8ee9" d="M7 16l4-4v3h6v-3l4 4-4 4v-3h-6v3z"/></svg>
    </div>
  </aside>
</main>

<footer class="status">
  <span>PAGE 1 OF 5</span>
  <button class="query">DirectQuery: Enabled (click to change)</button>
  <button class="update">UPDATE AVAILABLE (CLICK TO DOWNLOAD)</button>
</footer>
</body>
</html>
```
FILE: styles.css
```css
* { box-sizing: border-box; }
body {
  margin: 0;
  min-height: 100vh;
  display: grid;
  grid-template-rows: 23px 23px 92px 1fr 22px;
  font-family: "Open Sans", "Noto Sans", sans-serif;
  font-size: 11px;
  color: #222;
  background: #fff;
}
button {
  border: 0;
  padding: 0;
  background: none;
  font: inherit;
  color: inherit;
}
h2, h3, h4, p, ol { margin: 0; padding: 0; font-weight: 400; }
input { margin: 0; }
svg { flex: none; }
.defs { display: none; }

/* Title bar */
.titlebar { display: flex; align-items: center; gap: 7px; }
.logo { width: 16px; height: 16px; margin-top: -2px; }
.vbar { width: 1px; height: 12px; background: #888; }
.quick { display: flex; width: 15px; }
.quick svg { width: 15px; height: 15px; }
.smile, .smile svg { width: 22px; height: 16px; }
.narrow { margin-left: 3px; width: 8px; }
.narrow svg { width: 8px; height: 8px; }
.app-title { color: #000; }
.window-buttons { margin-left: auto; display: flex; gap: 34px; padding-right: 20px; }
.window-buttons button { display: flex; }
.window-buttons svg { width: 11px; height: 11px; }

/* Ribbon tabs */
.ribbon-tabs { display: flex; border-bottom: 1px solid #d4d4d4; font-size: 12px; color: #333; }
.file { width: 56px; background: #6e6e6e; color: #fff; }
.home { width: 75px; background: #f4f4f4; border: 1px solid #d4d4d4; border-bottom: 0; margin-bottom: -1px; }
.view { width: 56px; }
.modeling { width: 76px; }
.account { margin-left: auto; display: flex; align-items: center; gap: 18px; padding-right: 4px; font-size: 11px; }
.help { width: 14px; height: 14px; border-radius: 50%; background: #0a74d0; color: #fff; font-weight: 700; line-height: 14px; margin-left: -8px; }

/* Ribbon */
.ribbon { display: flex; background: #f4f4f4; border-bottom: 1px solid #c8c8c8; }
.group { display: flex; flex-direction: column; margin: 3px 0 2px; border-right: 1px solid #dcdcdc; }
.clipboard { width: 155px; padding-left: 2px; }
.external { width: 258px; }
.resources { width: 121px; padding-left: 1px; }
.insert { width: 165px; padding-left: 1px; }
.relations { width: 86px; }
.calculations { width: 73px; }
.share { width: 54px; }
.tools { display: flex; flex: 1; align-items: flex-start; }
.caption { text-align: center; line-height: 14px; color: #444; }
.big { line-height: 13px; color: #222; white-space: nowrap; padding-top: 5px; text-align: center; }
.big.off, .off { color: #888; }
.big svg { display: block; width: 32px; height: 32px; margin: 0 auto 3px; }
.w38 { width: 38px; }
.w47 { width: 47px; }
.w48 { width: 48px; }
.w50 { width: 48px; }
.w54 { width: 54px; }
.w57 { width: 57px; }
.wide { width: 100%; }
.split { width: 1px; align-self: stretch; margin: 6px 2px 12px; background: #dcdcdc; }
.stack { display: flex; flex-direction: column; }
.insert .stack { padding-left: 4px; }
.small { display: flex; align-items: center; gap: 4px; height: 22px; white-space: nowrap; }
.small svg { width: 16px; height: 16px; }
.arrow { display: inline-block; border: 3px solid transparent; border-top: 4px solid currentColor; border-bottom: 0; vertical-align: 2px; }

/* Workspace */
.workspace { display: grid; grid-template-columns: 42px minmax(0, 1fr) 178px 180px; min-height: 0; }
.views { background: #212121; display: flex; flex-direction: column; }
.views button { height: 42px; display: flex; align-items: center; justify-content: center; padding-right: 3px; border-left: 3px solid transparent; }
.views .current { border-color: #f2c811; }
.views svg { width: 19px; height: 19px; }
.center { display: flex; flex-direction: column; background: #e9e9e9; border-right: 1px solid #222; }
.stage { flex: 1; display: grid; grid-template: 1fr / minmax(0, 1fr); }
.stage > * { grid-area: 1 / 1; }
.formula { z-index: 1; display: flex; gap: 3px; align-self: start; padding: 4px 5px 0 4px; }
.commit, .editor { display: flex; height: 28px; background: #fff; border: 1px solid #c6c6c6; align-items: center; }
.commit { width: 75px; justify-content: space-around; }
.commit button { display: flex; }
.commit svg { width: 16px; height: 14px; }
.editor { flex: 1; min-width: 0; padding: 0 6px 2px 10px; justify-content: space-between; }
.code { font: 11px/18px "Liberation Mono", "DejaVu Sans Mono", monospace; color: #222; white-space: nowrap; overflow: hidden; outline: 0; }
.code b { font-weight: 400; color: #3568c8; }
.marked { display: inline-block; background: #add6ff; border-right: 1px solid #000; }
.editor svg { width: 12px; height: 8px; display: block; }

.page { margin: 0 26px 0 25px; padding: 38px 28px 9px 18px; background: #fff; box-shadow: 0 0 6px #ccc; display: flex; flex-direction: column; gap: 18px; }
.row-top { display: grid; grid-template-columns: 200fr 1196fr; gap: 10px; height: 272px; }
.row-bottom { flex: 1; display: grid; grid-template-columns: 318fr 318fr 752fr; gap: 9px; }
.row-top > *, .row-bottom > * { min-width: 0; }
.column { display: flex; flex-direction: column; }
.card { background: #d0eef8; border: 1px solid #a6abad; overflow: hidden; display: flex; flex-direction: column; }
.card h2 { flex: none; height: 24px; padding-left: 6px; background: #015c55; color: #fff; font-size: 17px; line-height: 26px; white-space: nowrap; }
.province { height: 237px; }
.ratio { flex: 1; margin-top: 17px; border: 0; }
.ratio h2 { padding-left: 7px; }
.total { height: 128px; background: #f5d33f; }
.state { flex: 1; margin-top: 26px; }
.figure { flex: 1; display: flex; align-items: center; justify-content: center; padding-top: 6px; font-size: 38px; color: #f00; }
.chart { width: 100%; height: 0; flex: 1 1 0; min-height: 0; }
.axis { font-size: 12px; fill: #777; }
.end { text-anchor: end; }
.value { font-size: 13px; text-anchor: middle; fill: #000; }

.slicer { margin: 6px 6px 0; padding: 14px 0 0 11px; border-top: 1px solid #8a8f91; font-size: 15px; color: #222; }
.slicer label { display: flex; align-items: center; height: 24px; }
.twist { flex: none; border: 5px solid transparent; border-left: 6px solid #a6a6a6; border-right: 0; }
.slicer input { appearance: none; width: 15px; height: 15px; margin: 2px 5px 0 4px; border: 2px solid #c8c8c8; }

.timeline { padding: 25px 5px 0 6px; color: #808080; font-size: 13px; }
.time-head { display: flex; align-items: flex-start; height: 52px; padding-left: 22px; }
.grain { display: block; }
.grain-text { font-size: 11px; fill: #222; text-anchor: middle; }
.range { margin: 8px 0 0 72px; font-size: 17px; line-height: 22px; color: #222; white-space: nowrap; }
.scale, .days { display: grid; grid-template-columns: repeat(35, 34px); margin-left: 16px; overflow: hidden; }
.scale { grid-template-rows: repeat(4, 20px); }
.scale span { display: flex; align-items: center; justify-content: center; }
.scale .wk { grid-row: 4; }
.c1 { grid-column: 1; }
.c7 { grid-column: 7; }
.c14 { grid-column: 14; }
.c21 { grid-column: 21; }
.c28 { grid-column: 28; }
.c32 { grid-column: 32; grid-row: 3; }
.c35 { grid-column: 35; }
.days { list-style: none; height: 23px; line-height: 22px; text-align: center; }
.track { display: flex; height: 36px; }
.cap { width: 16px; border-radius: 16px 0 0 16px; background: #808080; }
.cells { flex: 1; border: 1px solid #555; border-right: 0; background: repeating-linear-gradient(90deg, #f5d33f 0 33px, #444 33px 34px); }
.thumb { width: 20px; height: 9px; margin-top: 11px; background: #c8c8c8; }

/* Hospital list */
.list-body { padding: 6px 6px 0 6px; font-family: "Liberation Sans", Arial, sans-serif; font-size: 14px; }
.list-tools { display: flex; width: 95px; height: 34px; border: 1px solid #c8c8c8; border-radius: 5px; margin-bottom: 7px; }
.list-tools button { flex: 1; display: flex; align-items: center; justify-content: center; }
.list-tools button + button { border-left: 1px solid #c8c8c8; }
.list-tools svg { width: 18px; height: 18px; }
.table-wrap { position: relative; border-top: 1px solid #999; padding-top: 7px; }
table { width: 100%; table-layout: fixed; border-collapse: separate; border-spacing: 0; }
.k-rank { width: 58px; }
.k-name { width: 227px; }
.k-city { width: 227px; }
.k-count { width: 114px; }
th { padding: 0; background: #999; font-weight: 400; text-align: left; color: #111; border-right: 4px solid #d3d3d3; }
th > div { display: flex; flex-direction: column; justify-content: space-between; height: 57px; padding: 4px 9px 5px 15px; white-space: nowrap; }
.rank > div { justify-content: flex-end; padding: 5px 0 5px 16px; }
th:nth-child(3) { border-right: 0; }
.ops { display: flex; gap: 3px; justify-content: flex-end; }
.ops svg { width: 12px; height: 13px; }
.sorted { background: linear-gradient(90deg, #999 2px, #017f76 2px 17px, #01b8aa 17px); font-weight: 700; font-size: 13px; }
.sorted > div { padding: 4px 8px 5px 16px; }
.sort { width: 0; border: 4px solid transparent; border-top-color: #000; border-bottom: 0; margin: 6px 0 0 -13px; }
.rest { background: #d3d3d3; border: 0; }
tbody tr { height: 25px; }
td { padding: 2px 0 0 4px; line-height: 23px; color: #222; }
.top { background: linear-gradient(90deg, #67d3d1 111px, transparent 111px); }
.redaction { position: absolute; left: 53px; top: 67px; width: 231px; height: 353px; background: #4472c7; border: 2px solid #2f528f; }
.callout { position: absolute; left: 507px; top: -2px; width: 127px; height: 72px; border: 5px solid #f00; }
.callout-text { position: absolute; left: 445px; top: -45px; font-size: 33px; line-height: 38px; font-weight: 700; color: #f00; white-space: nowrap; }

/* Sheet tabs */
.sheets { display: flex; height: 35px; color: #666; font-size: 12px; }
.sheets button { border-right: 1px solid #c8c8c8; white-space: nowrap; }
.pager { width: 34px; display: flex; align-items: center; justify-content: center; gap: 11px; border-right: 1px solid #c8c8c8; }
.pager i { border: 4px solid transparent; border-right: 4px solid #c0c0c0; border-left: 0; }
.pager .next { border-left: 4px solid #c0c0c0; border-right: 0; }
.sheets .current { background: #fff; border-bottom: 3px solid #f2c811; padding-top: 3px; }
.s1 { width: 234px; }
.s2 { width: 160px; }
.s3 { width: 200px; }
.s4 { width: 210px; }
.s5 { width: 254px; }
.sheets .add { width: 39px; background: #f2c811; font-size: 18px; font-weight: 700; border: 0; color: #665500; }

/* Side panels */
.panel { background: #444; color: #fff; border-right: 2px solid #1c1c1c; display: flex; flex-direction: column; }
.panel h3, .panel h4 { display: flex; align-items: center; justify-content: space-between; background: #212121; font: 700 14px/20px Roboto, sans-serif; padding: 0 10px 0 12px; }
.panel h3 { height: 47px; flex: none; }
.panel h3 svg { width: 8px; height: 12px; }
.panel h4 { height: 35px; padding-left: 14px; font-size: 15px; }
.gallery { display: grid; grid-template-columns: repeat(6, 28px); grid-auto-rows: 24px; padding: 3px 0 1px 4px; }
.gallery button { display: flex; align-items: center; justify-content: center; }
.gallery svg { width: 18px; height: 18px; }
.gallery .grown svg { width: 21px; height: 21px; }
.tiny { font: 700 7px "Liberation Sans", sans-serif; fill: #4a82bd; }
.wells-tabs { display: flex; gap: 4px; height: 35px; background: #212121; padding-left: 12px; }
.wells-tabs button { width: 36px; display: flex; align-items: center; justify-content: center; border-bottom: 2px solid transparent; }
.wells-tabs .current { border-color: #f2c811; }
.wells-tabs svg { width: 22px; height: 22px; }
.well { padding: 0 5px 0 4px; color: #b3b3b3; font-size: 12px; }
.well p { padding: 9px 0 0 8px; height: 36px; line-height: 20px; }
.values { background: #4a4a4a; padding-bottom: 5px; }
.values p { padding-top: 5px; height: 29px; }
.values .drop { height: 27px; line-height: 25px; }
.drop { height: 24px; border: 1px dashed #777; border-radius: 4px; padding-left: 9px; line-height: 22px; }

.fields { border-right: 0; color: #fff; }
.search { display: flex; align-items: center; gap: 8px; height: 31px; margin: 7px 10px 9px; padding: 0 10px; background: #212121; border: 1px solid #000; }
.search svg { width: 17px; height: 17px; }
.search input { min-width: 0; flex: 1; border: 0; background: none; color: #fff; font: 12px "Open Sans", sans-serif; outline: 0; padding: 0; }
.search input::placeholder { color: #aaa; opacity: 1; }
.tree { position: relative; flex: 1; display: flex; flex-direction: column; border-top: 1px solid #111; padding-top: 7px; }
.leafs { display: grid; grid-auto-rows: 1fr; gap: 2px; margin: 0 7px 0 5px; }
.first { height: 108px; margin-bottom: 4px; }
.main { flex: 1; margin-top: 4px; margin-bottom: 3px; }
.leafs label { display: flex; align-items: center; background: #666; border-radius: 2px; box-shadow: 0 1px 1px #333; padding-left: 26px; white-space: nowrap; min-height: 0; line-height: 16px; }
.leafs .picked { outline: 1px solid #f2c811; }
.leafs input { appearance: none; width: 12px; height: 12px; background: #fff; border: 2px solid #ccc; }
.leafs svg { width: 13px; height: 12px; margin: 0 5px 0 3px; }
.node { display: flex; align-items: center; height: 24px; padding-left: 12px; }
.node .twist { border-width: 4px 0 4px 5px; }
.node svg { width: 13px; height: 12px; margin: 0 12px 0 9px; }
.node.open { background: #333; }
.node.open .twist { width: 5px; height: 6px; border: 0; background: linear-gradient(135deg, transparent 50%, #aaa 50%); }
.scrollbar { position: absolute; right: 0; bottom: 0; width: 6px; height: 252px; background: #787878; border-radius: 3px; }
.remote { position: absolute; right: 0; bottom: 26px; width: 24px; height: 54px; }

/* Status bar */
.status { display: flex; align-items: center; background: #333; color: #fff; font-family: "Liberation Sans", Arial, sans-serif; padding: 0 5px; gap: 13px; }
.query { margin-left: auto; }
```
